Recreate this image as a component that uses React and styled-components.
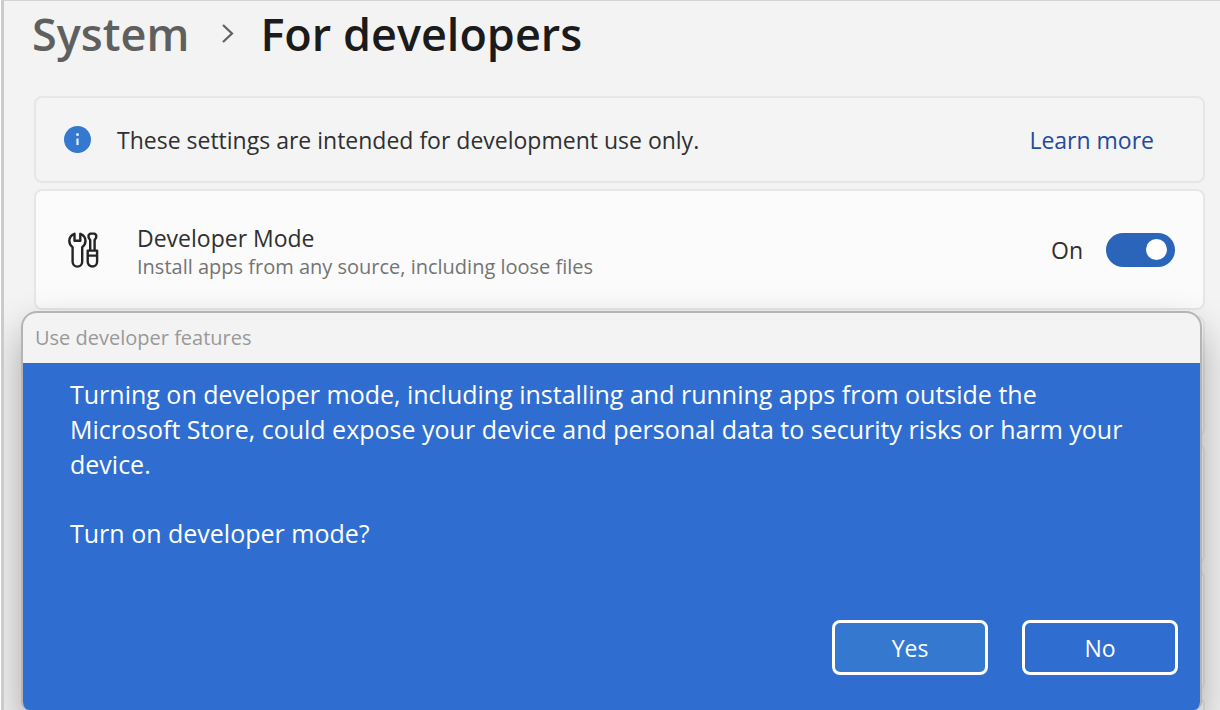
import React, { useState } from "react";
import styled, { createGlobalStyle } from "styled-components";

const GlobalStyle = createGlobalStyle`
  *, *::before, *::after { box-sizing: border-box; }
  body {
    margin: 0;
    background: #fff;
    color: #303030;
    font-family: "Open Sans", "Noto Sans", sans-serif;
    font-size: 23px;
    line-height: 34px;
    overflow: hidden;
  }
`;

const Page = styled.main`
  height: 100vh;
  overflow: hidden;
  margin-left: 1px;
  padding: 3px 15px 0 30px;
  border-left: 3px solid #cbcbcb;
  border-top: 1px solid #d3d3d3;
  background: #f3f3f3;
`;

const Breadcrumb = styled.nav`
  display: flex;
  align-items: center;
  gap: 26px;
  height: 60px;
  margin: 0 0 32px -2px;
  font-size: 45px;
  font-weight: 600;
`;

const Crumb = styled.a`
  padding-right: 7px;
  color: #5f5f5f;
  text-decoration: none;
`;

const Title = styled.h1`
  margin: 0;
  color: #1b1b1b;
  font-size: inherit;
  font-weight: inherit;
`;

const Card = styled.section`
  display: flex;
  align-items: center;
  min-height: ${({ $tall }) => ($tall ? 121 : 87)}px;
  padding: 0 28px;
  margin-bottom: 6px;
  border: 2px solid #e6e6e6;
  border-radius: 8px;
  background: ${({ $tall }) => ($tall ? "#fbfbfb" : "#f4f4f4")};
`;

const Notice = styled.p`
  flex: 1;
  margin: 0 0 0 26px;
`;

const Link = styled.a`
  margin-right: 21px;
  color: #234a9c;
  text-decoration: none;
`;

const Setting = styled.div`
  flex: 1;
  margin: 4px 0 0 37px;
`;

const SettingName = styled.h2`
  margin: 0;
  font-size: 23px;
  font-weight: 400;
  line-height: 30px;
`;

const SettingHint = styled.p`
  margin: 0;
  color: #747474;
  font-size: 20px;
  line-height: 28px;
`;

const SwitchLabel = styled.label`
  display: flex;
  align-items: center;
  gap: 23px;
`;

const Switch = styled.input`
  appearance: none;
  display: flex;
  align-items: center;
  justify-content: ${({ checked }) => (checked ? "flex-end" : "flex-start")};
  width: 69px;
  height: 34px;
  margin: 0;
  padding: 0 8px;
  border-radius: 17px;
  background: ${({ checked }) => (checked ? "#2a65b9" : "#8a8a8a")};
  &::before {
    content: "";
    width: 21px;
    height: 21px;
    border-radius: 50%;
    background: #fff;
  }
`;

const Stage = styled.div`
  display: grid;
  margin-top: -5px;
  & > * { grid-area: 1 / 1; }
`;

const Backdrop = styled.div`
  padding-top: 5px;
`;

const Dialog = styled.section`
  position: relative;
  align-self: start;
  margin: 0 3px 0 -13px;
  border: 2px solid #b4b4b4;
  border-bottom: 0;
  border-radius: 16px 16px 8px 8px;
  box-shadow: 0 20px 40px rgba(0, 0, 0, 0.32);
  background: #f3f3f3;
  overflow: hidden;
`;

const DialogTitle = styled.h2`
  margin: 0;
  padding: 0 12px;
  color: #999;
  font-size: 20px;
  font-weight: 400;
  line-height: 50px;
`;

const DialogBody = styled.div`
  padding: 14px 22px 35px 47px;
  background: #2f6ed0;
  color: #fff;
`;

const Message = styled.p`
  max-width: 1060px;
  margin: 0 0 34px;
  font-size: 25px;
  line-height: 35px;
`;

const Actions = styled.div`
  display: flex;
  justify-content: flex-end;
  gap: 34px;
  padding-top: 35px;
`;

const Button = styled.button`
  width: 156px;
  height: 55px;
  border: 3px solid #fff;
  border-radius: 8px;
  background: ${({ $primary }) => ($primary ? "#3578cf" : "transparent")};
  color: #fff;
  font: inherit;
`;

const Chevron = () => (
  <svg width="12" height="22" viewBox="0 0 12 22" fill="none" stroke="#5f5f5f" strokeWidth="2.2" aria-hidden="true">
    <path d="M1 2 10 10.500 1 19" />
  </svg>
);

const InfoIcon = () => (
  <svg width="27" height="27" viewBox="0 0 27 27" aria-hidden="true">
    <circle cx="13.5" cy="13.5" r="13.5" fill="#3478cf" />
    <circle cx="13.5" cy="8.5" r="1.5" fill="#e6f0fb" />
    <path d="M13.5 12.500v6.500" stroke="#e6f0fb" strokeWidth="2.2" />
  </svg>
);

const ToolsIcon = () => (
  <svg width="36" height="36" viewBox="-3 0 36 36" fill="none" stroke="#242424" strokeWidth="2.4" strokeLinejoin="round" strokeLinecap="round" aria-hidden="true">
    <path d="M7.500 1.800C4.300 3 2.300 5.600 2.300 8.800c0 3 1.400 5 3.300 6.400V29.800a4.800 4.800 0 0 0 9.600 0V15.200c1.900-1.400 3.300-3.400 3.300-6.400 0-3.200-2-5.800-5.200-7V8.800H7.500Z" />
    <path d="M23.200 18V8.200L21.600 5.500V3.200L23.200 1.600h4.400L29.200 3.200V5.500L27.600 8.200V18" />
    <path d="M20.700 18.600h9.400v11.200a4.700 4.700 0 0 1-9.400 0ZM20.700 23.600h9.400" />
  </svg>
);

export default function App() {
  const [on, setOn] = useState(true);
  return (
    <>
      <GlobalStyle />
      <Page>
        <Breadcrumb aria-label="Breadcrumb">
          <Crumb href="#system">System</Crumb>
          <Chevron />
          <Title>For developers</Title>
        </Breadcrumb>
        <Card>
          <InfoIcon />
          <Notice>These settings are intended for development use only.</Notice>
          <Link href="#learn-more">Learn more</Link>
        </Card>
        <Card $tall>
          <ToolsIcon />
          <Setting>
            <SettingName>Developer Mode</SettingName>
            <SettingHint>Install apps from any source, including loose files</SettingHint>
          </Setting>
          <SwitchLabel>
            {on ? "On" : "Off"}
            <Switch type="checkbox" role="switch" checked={on} onChange={(e) => setOn(e.target.checked)} />
          </SwitchLabel>
        </Card>
        <Stage>
          <Backdrop aria-hidden="true">
            <Card $tall />
            <Card $tall />
            <Card $tall />
            <Card $tall />
          </Backdrop>
          <Dialog role="dialog" aria-labelledby="dialog-title">
            <DialogTitle id="dialog-title">Use developer features</DialogTitle>
            <DialogBody>
              <Message>
                Turning on developer mode, including installing and running apps from outside the Microsoft Store, could
                expose your device and personal data to security risks or harm your device.
              </Message>
              <Message>Turn on developer mode?</Message>
              <Actions>
                <Button type="button" $primary>Yes</Button>
                <Button type="button">No</Button>
              </Actions>
            </DialogBody>
          </Dialog>
        </Stage>
      </Page>
    </>
  );
}
